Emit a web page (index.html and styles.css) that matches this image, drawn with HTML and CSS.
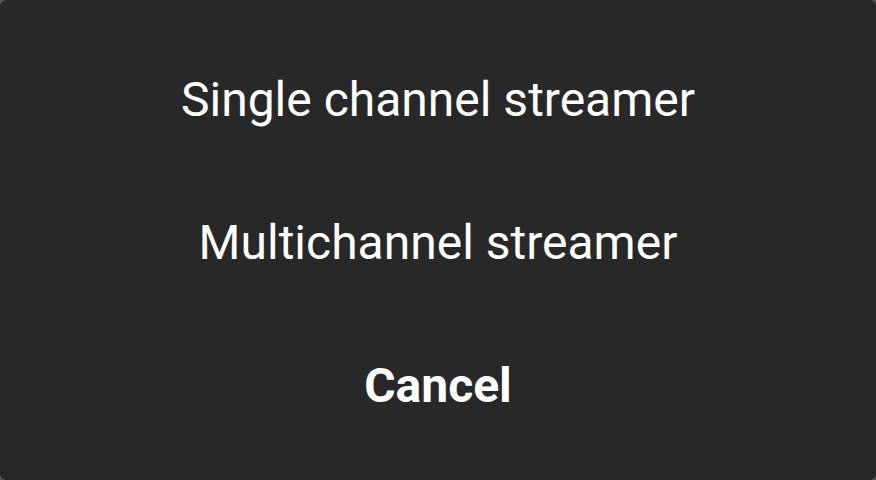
FILE: index.html
```html
<!DOCTYPE html>
<html>
<head>
<meta charset="utf-8">
<link rel="stylesheet" href="styles.css">
</head>
<body>
<div class="sheet">
  <div class="option">Single channel streamer</div>
  <div class="option">Multichannel streamer</div>
  <div class="option cancel">Cancel</div>
</div>
</body>
</html>
```
FILE: styles.css
```css
html, body {
  margin: 0;
  padding: 0;
  background: #5a5a5a;
}
.sheet {
  width: 876px;
  height: 480px;
  box-sizing: border-box;
  background: #282828;
  border-radius: 6px;
  padding: 28px 0 23px;
  display: flex;
  flex-direction: column;
}
.option {
  flex: 1;
  display: flex;
  align-items: center;
  justify-content: center;
  color: #ffffff;
  font-family: Roboto, "Noto Sans", sans-serif;
  font-size: 48px;
}
.cancel {
  font-weight: 700;
}
```
